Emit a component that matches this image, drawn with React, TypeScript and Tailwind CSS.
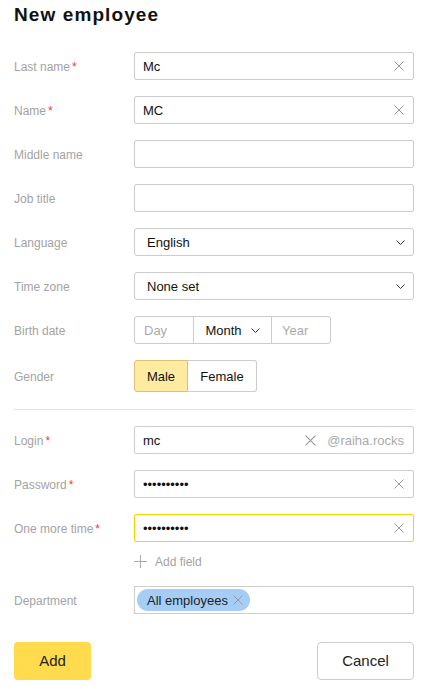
import React from "react";

const Clear = ({ size = 10 }: { size?: number }) => (
  <svg width={size} height={size} viewBox="0 0 10 10" className="shrink-0">
    <path d="M0.5 0.5L9.5 9.5M9.5 0.5L0.5 9.5" stroke="#9a9a9a" strokeWidth="1" fill="none" />
  </svg>
);

const Chevron = () => (
  <svg width="9" height="5" viewBox="0 0 9 5" className="shrink-0">
    <path d="M0.5 0.5L4.5 4.5L8.5 0.5" stroke="#333" strokeWidth="1" fill="none" />
  </svg>
);

const Label = ({ text, req }: { text: string; req?: boolean }) => (
  <div className="w-[120px] shrink-0 pt-[2px] text-[12px] text-[#a3a3a3] leading-none">
    {text}
    {req && <span className="text-[#ff3333] ml-[2px]">*</span>}
  </div>
);

const Row = ({ children, className = "" }: { children: React.ReactNode; className?: string }) => (
  <div className={"flex items-center " + className}>{children}</div>
);

const TextField = ({ value, clear, focused, suffix }: { value?: string; clear?: boolean; focused?: boolean; suffix?: string }) => (
  <div
    className={
      "flex-1 h-[28px] flex items-center border rounded-[2px] pl-[8px] pr-[9px] " +
      (focused ? "border-[#ffcc00]" : "border-[#cccccc]")
    }
  >
    <span className="flex-1 pt-[1px] text-[13px] text-[#111] leading-none">{value}</span>
    {clear && <Clear size={suffix ? 11 : 10} />}
    {suffix && <span className="ml-[11px] pt-[1px] text-[13px] text-[#aaaaaa] leading-none">{suffix}</span>}
  </div>
);

const SelectField = ({ value }: { value: string }) => (
  <div className="flex-1 h-[28px] flex items-center border border-[#cccccc] rounded-[3px] pl-[12px] pr-[8px]">
    <span className="flex-1 text-[13px] text-[#111] leading-none">{value}</span>
    <Chevron />
  </div>
);

export default function App() {
  return (
    <div className="w-[422px] h-[689px] bg-white pl-[14px] pr-[8px] font-['Liberation_Sans',Arial,sans-serif]">
      <h1 className="h-[30px] leading-[30px] text-[19px] font-bold tracking-[1.1px] text-[#111]">New employee</h1>

      <div className="flex flex-col gap-[16px] mt-[22px]">
        <Row>
          <Label text="Last name" req />
          <TextField value="Mc" clear />
        </Row>
        <Row>
          <Label text="Name" req />
          <TextField value="MC" clear />
        </Row>
        <Row>
          <Label text="Middle name" />
          <TextField />
        </Row>
        <Row>
          <Label text="Job title" />
          <TextField />
        </Row>
        <Row>
          <Label text="Language" />
          <SelectField value="English" />
        </Row>
        <Row>
          <Label text="Time zone" />
          <SelectField value="None set" />
        </Row>
        <Row>
          <Label text="Birth date" />
          <div className="flex h-[28px] border border-[#cccccc] rounded-[3px] text-[13px] leading-none">
            <div className="w-[58px] flex items-center pl-[9px] text-[#aaaaaa]">Day</div>
            <div className="w-[78px] flex items-center justify-center gap-[9px] border-l border-[#cccccc] text-[#111]">
              <span>Month</span>
              <Chevron />
            </div>
            <div className="w-[59px] flex items-center pl-[10px] border-l border-[#cccccc] text-[#aaaaaa]">Year</div>
          </div>
        </Row>
        <Row>
          <Label text="Gender" />
          <div className="flex h-[32px] text-[13px] leading-none text-[#111]">
            <div className="w-[54px] flex items-center justify-center bg-[#ffeba0] border border-[#d8c275] rounded-l-[3px]">
              Male
            </div>
            <div className="w-[69px] flex items-center justify-center border border-l-0 border-[#cccccc] rounded-r-[3px]">
              Female
            </div>
          </div>
        </Row>
      </div>

      <div className="h-px bg-[#e3e3e3] mt-[17px]" />

      <div className="flex flex-col gap-[16px] mt-[16px]">
        <Row>
          <Label text="Login" req />
          <TextField value="mc" clear suffix="@raiha.rocks" />
        </Row>
        <Row>
          <Label text="Password" req />
          <TextField value="••••••••••" clear />
        </Row>
        <Row>
          <Label text="One more time" req />
          <TextField value="••••••••••" clear focused />
        </Row>
      </div>

      <Row className="mt-[10px] h-[18px]">
        <div className="w-[120px] shrink-0" />
        <svg width="13" height="13" viewBox="0 0 13 13" className="shrink-0">
          <path d="M6.5 0V13M0 6.5H13" stroke="#aaaaaa" strokeWidth="1" fill="none" />
        </svg>
        <span className="ml-[8px] pt-[1px] text-[12px] text-[#a3a3a3] leading-none">Add field</span>
      </Row>

      <Row className="mt-[16px]">
        <Label text="Department" />
        <div className="flex-1 h-[28px] flex items-center border border-[#cccccc] pl-[2px]">
          <div className="h-[22px] flex items-center gap-[5px] rounded-full bg-[#a6cdf6] pl-[10px] pr-[7px] text-[13px] text-[#222] leading-none">
            <span>All employees</span>
            <Clear size={10} />
          </div>
        </div>
      </Row>

      <div className="flex justify-between mt-[28px]">
        <button className="w-[77px] h-[38px] rounded-[4px] bg-[#ffdb4d] text-[15px] text-[#222]">Add</button>
        <button className="w-[97px] h-[38px] rounded-[4px] border border-[#cccccc] bg-white text-[15px] text-[#222]">
          Cancel
        </button>
      </div>
    </div>
  );
}
